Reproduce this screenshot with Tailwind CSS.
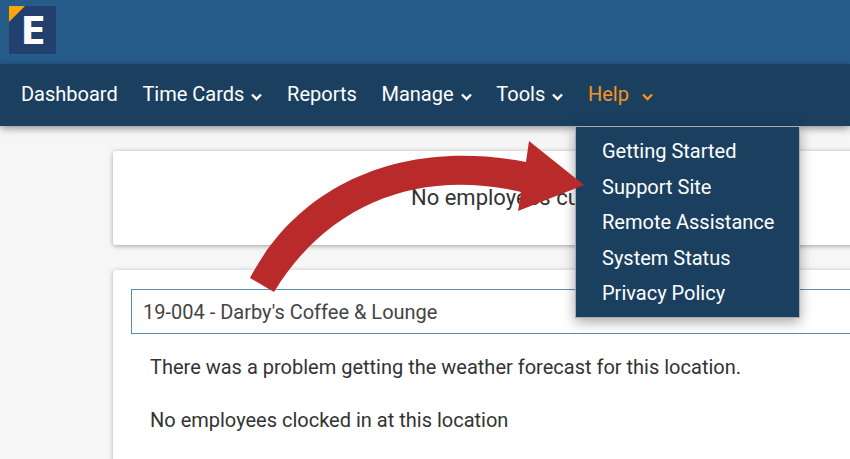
<!DOCTYPE html>
<html>

<head>
  <script src="https://cdn.jsdelivr.net/npm/@tailwindcss/browser@4"></script>
  <title>Help menu</title>
</head>

<body class="font-['Roboto',sans-serif]">
  <div class="relative w-[850px] h-[459px] overflow-hidden bg-[#f6f6f6]">
    <header class="h-16 bg-[#265c8a] pl-[9px] pt-[6px]">
      <div class="relative w-[47px] h-[48px] bg-[#233f6e] flex items-center justify-center pb-1">
        <div class="absolute left-0 top-0 w-4 h-4 bg-[#fba602] [clip-path:polygon(0_0,100%_0,0_100%)]"></div>
        <span class="text-white font-bold text-[39px] leading-none scale-x-[1.18] font-['Open_Sans',sans-serif]">E</span>
      </div>
    </header>

    <nav class="h-[62px] bg-[#1a3f5f] shadow-[0_2px_8px_rgba(0,0,0,0.45)] relative z-10 flex items-center pl-[8.65px] pb-[2px] text-[20px] text-white">
      <a class="px-[12.35px]">Dashboard</a>
      <a class="px-[12.35px] flex items-center gap-[7px]">Time Cards
        <svg class="w-[11px] h-2 mt-[6px]" viewBox="0 0 11 8" fill="none" stroke="currentColor" stroke-width="2.4"><path d="M1 1.5l4.5 4.5L10 1.5" /></svg>
      </a>
      <a class="px-[12.35px]">Reports</a>
      <a class="px-[12.35px] flex items-center gap-[7px]">Manage
        <svg class="w-[11px] h-2 mt-[6px]" viewBox="0 0 11 8" fill="none" stroke="currentColor" stroke-width="2.4"><path d="M1 1.5l4.5 4.5L10 1.5" /></svg>
      </a>
      <a class="px-[12.35px] flex items-center gap-[7px]">Tools
        <svg class="w-[11px] h-2 mt-[6px]" viewBox="0 0 11 8" fill="none" stroke="currentColor" stroke-width="2.4"><path d="M1 1.5l4.5 4.5L10 1.5" /></svg>
      </a>
      <a class="px-[12.35px] flex items-center gap-[13px] text-[#f7941d]">Help
        <svg class="w-[11px] h-2 mt-[6px]" viewBox="0 0 11 8" fill="none" stroke="currentColor" stroke-width="2.4"><path d="M1 1.5l4.5 4.5L10 1.5" /></svg>
      </a>
    </nav>

    <main class="pl-[113px] pt-[25px] w-[900px] text-[#333]">
      <div class="h-[94px] bg-white rounded-[3px] shadow-[0_1px_5px_rgba(0,0,0,0.35)] flex items-center text-[22px] pl-[298px] pb-[2px]">
        <p class="whitespace-nowrap">No employees currently clocked in</p>
      </div>
      <div class="mt-[25px] h-[300px] bg-white rounded-[3px] shadow-[0_1px_5px_rgba(0,0,0,0.3)] pt-[19px] pl-[18px]">
        <div class="h-[45px] border border-[#5b8db8] flex items-center pl-[11px] text-[20px] text-[#444]">19-004 - Darby's Coffee &amp; Lounge</div>
        <p class="mt-[18px] ml-[19px] text-[20px]">There was a problem getting the weather forecast for this location.</p>
        <p class="mt-[23px] ml-[19px] text-[20px]">No employees clocked in at this location</p>
      </div>
    </main>

    <div class="absolute left-[575px] top-[126px] z-20 w-[225px] h-[192px] bg-[#1a3f5f] border border-[#a5aeb6] shadow-[0_4px_12px_rgba(0,0,0,0.35)] pl-[26px] pt-[7px] text-[20px] leading-[35.5px] text-white">
      <div>Getting Started</div>
      <div>Support Site</div>
      <div>Remote Assistance</div>
      <div>System Status</div>
      <div>Privacy Policy</div>
    </div>

    <svg class="absolute left-0 top-0 z-30" width="850" height="459" viewBox="0 0 850 459">
      <path fill="#b92b2b" d="M250 278C298 186 400 138 526 162L529 141L584 185L518 211L521 192C420 168 328 203 274 292Z" />
    </svg>
  </div>
</body>

</html>
